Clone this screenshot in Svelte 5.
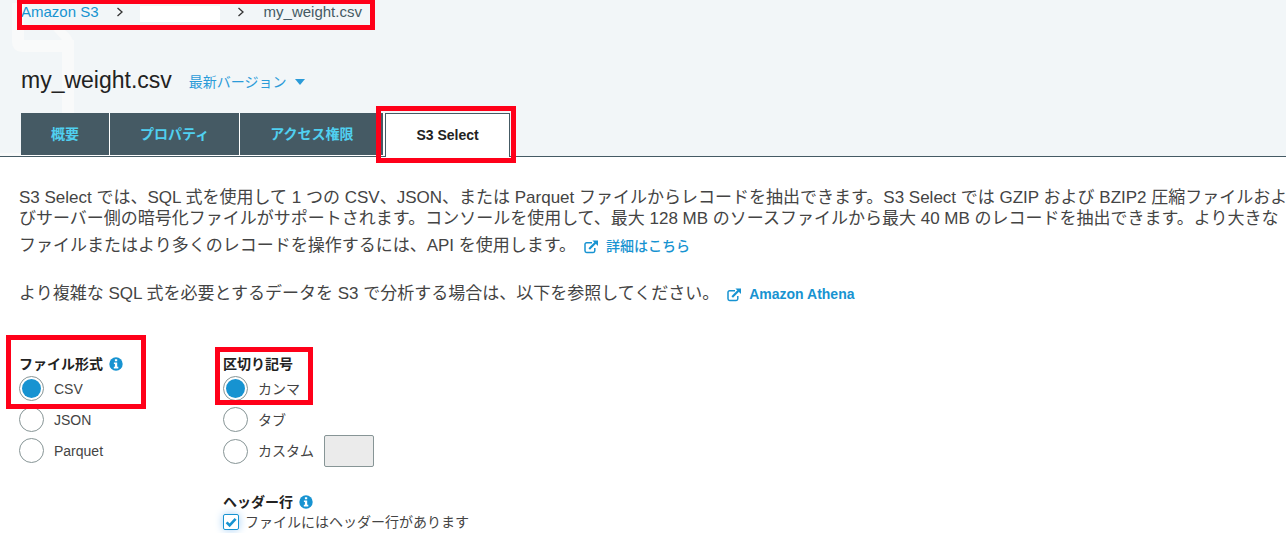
<script>
  const fileName = 'my_weight.csv';
  const tabs = [
    { id: 'overview', label: '概要' },
    { id: 'properties', label: 'プロパティ' },
    { id: 'permissions', label: 'アクセス権限' },
    { id: 'select', label: 'S3 Select' }
  ];
  const formats = ['CSV', 'JSON', 'Parquet'];

  let activeTab = $state('select');
  let format = $state('CSV');
  let delimiter = $state('comma');
  let customDelimiter = $state('');
  let hasHeader = $state(true);
</script>

{#snippet external()}
  <svg class="external" viewBox="0 0 14 14" aria-hidden="true">
    <path d="M8 2.7H2.6A1.6 1.6 0 0 0 1 4.3v6.5a1.6 1.6 0 0 0 1.6 1.6h6.6a1.6 1.6 0 0 0 1.6-1.6V8" fill="none" stroke="currentColor" stroke-width="1.5" />
    <path d="M5.2 9 11.4 2.8" stroke="currentColor" stroke-width="2.2" />
    <path d="M8.4.4H14V6z" fill="currentColor" />
  </svg>
{/snippet}

{#snippet info()}
  <svg class="info" viewBox="0 0 14 14" aria-hidden="true">
    <circle cx="7" cy="7" r="6.7" fill="#1793d1" />
    <path d="M5.9 2.2h2.3v2H5.9zM4.9 5.4h3.3v4.4h1.1v1.6H4.8V9.8h1.1V7h-1z" fill="#fff" />
  </svg>
{/snippet}

<header>
  <svg class="watermark" viewBox="0 0 80 156" aria-hidden="true">
    <path d="M0 153h21v3H0zM48 24q26 4 26 24L62 40z" fill="#f9fafa" />
    <path d="M18 3v39q0 4 4 4h46v110" fill="none" stroke="#f9fafa" stroke-width="12" />
  </svg>

  <nav class="crumbs" aria-label="breadcrumb">
    <a href="#s3">Amazon S3</a>
    <svg class="chevron" viewBox="0 0 8 10" aria-hidden="true"><path d="M1.5 1 6 5 1.5 9" /></svg>
    <span class="bucket"></span>
    <svg class="chevron" viewBox="0 0 8 10" aria-hidden="true"><path d="M1.5 1 6 5 1.5 9" /></svg>
    <span class="current">{fileName}</span>
    <span class="mark mark-crumbs"></span>
  </nav>

  <div class="title">
    <h1>{fileName}</h1>
    <button class="version" type="button">最新バージョン<span class="caret"></span></button>
  </div>

  <div class="tabs" role="tablist">
    {#each tabs as tab (tab.id)}
      <button
        type="button"
        role="tab"
        aria-selected={activeTab === tab.id}
        class:active={activeTab === tab.id}
        onclick={() => (activeTab = tab.id)}
      >{tab.label}{#if tab.id === 'select'}<span class="mark mark-tab"></span>{/if}</button>
    {/each}
  </div>
</header>

<main>
  <p>
    S3 Select では、SQL 式を使用して 1 つの CSV、JSON、または Parquet ファイルからレコードを抽出できます。S3 Select では GZIP および BZIP2 圧縮ファイルおよびサーバー側の暗号化ファイルがサポートされます。コンソールを使用して、最大 128 MB のソースファイルから最大 40 MB のレコードを抽出できます。より大きなファイルまたはより多くのレコードを操作するには、API を使用します。<a class="more light" href="#details">{@render external()}詳細はこちら</a>
  </p>
  <p>
    より複雑な SQL 式を必要とするデータを S3 で分析する場合は、以下を参照してください。<a class="more" href="#athena">{@render external()}Amazon Athena</a>
  </p>

  <form>
    <div class="group">
      <fieldset>
        <legend>ファイル形式 {@render info()}</legend>
        {#each formats as name (name)}
          <label class="choice"><input type="radio" name="format" value={name} bind:group={format} />{name}</label>
        {/each}
      </fieldset>
      <span class="mark mark-format"></span>
    </div>

    <div class="group">
      <fieldset>
        <legend>区切り記号</legend>
        <label class="choice"><input type="radio" name="delimiter" value="comma" bind:group={delimiter} />カンマ</label>
        <label class="choice"><input type="radio" name="delimiter" value="tab" bind:group={delimiter} />タブ</label>
        <div class="custom">
          <label class="choice"><input type="radio" name="delimiter" value="custom" bind:group={delimiter} />カスタム</label>
          <input class="text" type="text" aria-label="カスタム" bind:value={customDelimiter} disabled={delimiter !== 'custom'} />
        </div>
      </fieldset>

      <fieldset class="header-row">
        <legend>ヘッダー行 {@render info()}</legend>
        <label class="check">
          <span class="box">
            <input type="checkbox" bind:checked={hasHeader} />
            {#if hasHeader}
              <svg viewBox="0 0 12 12" aria-hidden="true"><path d="M1.6 6.4 4.6 9.3 10.6 2.8" /></svg>
            {/if}
          </span>
          ファイルにはヘッダー行があります
        </label>
      </fieldset>
      <span class="mark mark-delimiter"></span>
    </div>
  </form>
</main>

<style>
  :global(body) {
    background: #fff;
    color: #444;
    font: 14px/20px 'Liberation Sans', 'Noto Sans CJK JP', sans-serif;
  }

  a {
    color: #1793d1;
    text-decoration: none;
  }

  button {
    border: 0;
    background: none;
    font: inherit;
    cursor: pointer;
  }

  header {
    position: relative;
    padding: 0 21px;
    background: #f2f6f8;
    border-bottom: 1px solid #455a64;
  }

  .watermark {
    position: absolute;
    left: 0;
    top: 0;
    width: 80px;
    height: 156px;
  }

  .crumbs {
    position: relative;
    display: flex;
    align-items: center;
    height: 24px;
    color: #455a64;
    font-size: 15px;
  }

  .chevron {
    width: 8px;
    height: 10px;
    margin: 0 16px 0 17px;
    fill: none;
    stroke: #333;
    stroke-width: 1.3;
  }

  .bucket {
    width: 80px;
    height: 16px;
    margin-top: 4px;
    background: #fff;
  }

  .current {
    padding-left: 3px;
  }

  .title {
    position: relative;
    display: flex;
    align-items: center;
    gap: 17px;
    height: 32px;
    margin: 40px 0 17px;
  }

  h1 {
    margin: 0;
    color: #222;
    font-size: 23px;
    font-weight: 400;
    line-height: 32px;
  }

  .version {
    display: flex;
    align-items: center;
    gap: 8px;
    padding: 4px 0 0;
    color: #2b9bd8;
  }

  .caret {
    border: 5px solid transparent;
    border-top: 6px solid #2b9bd8;
    border-bottom: 0;
  }

  .tabs {
    position: relative;
    display: flex;
    gap: 1px;
    margin-bottom: -1px;
  }

  .tabs::before {
    content: '';
    position: absolute;
    inset: 0 auto 1px 0;
    width: 364px;
    background: #fff;
  }

  .tabs button {
    position: relative;
    height: 42px;
    padding: 0 30px;
    background: #455a64;
    color: #50d0f0;
    font-weight: 700;
  }

  .tabs .active {
    height: 44px;
    margin-left: 1px;
    padding-bottom: 2px;
    border: 1px solid #455a64;
    border-bottom: 0;
    background: #fff;
    color: #222;
  }

  main {
    padding: 30px 0 0 19px;
    overflow: clip;
  }

  p {
    margin: 0 -4px 13px 0;
    color: #444;
    font-size: 17px;
    line-height: 21px;
  }

  .more {
    display: inline-flex;
    align-items: center;
    height: 35px;
    margin-left: 8px;
    font-size: 14px;
    font-weight: 700;
    vertical-align: middle;
  }

  .light {
    font-weight: 500;
  }

  .external {
    width: 14px;
    height: 14px;
    margin-right: 8px;
  }

  form {
    display: flex;
    gap: 100px;
    padding-top: 30px;
  }

  .group {
    position: relative;
    min-width: 100px;
  }

  fieldset {
    min-width: 0;
    margin: 0;
    padding: 0;
    border: 0;
  }

  legend {
    display: flex;
    align-items: center;
    gap: 6px;
    padding: 0;
    color: #222;
    font-weight: 700;
    line-height: 18px;
  }

  .info {
    width: 14px;
    height: 14px;
  }

  .choice {
    display: flex;
    align-items: center;
    gap: 10px;
    height: 31px;
  }

  .choice input {
    display: grid;
    place-items: center;
    appearance: none;
    box-sizing: border-box;
    width: 25px;
    height: 25px;
    margin: 0;
    border: 1px solid #879596;
    border-radius: 50%;
    background: #fff;
  }

  .choice input:checked::before {
    content: '';
    width: 19px;
    height: 19px;
    border-radius: 50%;
    background: #1793d1;
  }

  .custom {
    display: flex;
    align-items: center;
    gap: 10px;
  }

  .text {
    box-sizing: border-box;
    width: 50px;
    height: 32px;
    padding: 0 6px;
    border: 1px solid #879596;
    border-radius: 2px;
    background: #fff;
    font: inherit;
  }

  .text:disabled {
    background: #ebebeb;
  }

  .header-row {
    margin-top: 26px;
  }

  .check {
    display: flex;
    align-items: center;
    gap: 6px;
    height: 22px;
  }

  .box {
    display: grid;
    width: 16px;
    height: 16px;
  }

  .box > * {
    grid-area: 1 / 1;
  }

  .box input {
    appearance: none;
    box-sizing: border-box;
    width: 16px;
    height: 16px;
    margin: 0;
    border: 1px solid #1793d1;
    border-radius: 2px;
    background: #fff;
    box-shadow: 0 0 8px #a5d0f5;
  }

  .box svg {
    width: 12px;
    height: 12px;
    place-self: center;
    fill: none;
    stroke: #1793d1;
    stroke-width: 2.6;
    pointer-events: none;
  }

  /* Highlight frames laid over the parts a reader should notice */
  .mark {
    position: absolute;
    z-index: 1;
    border: 5px solid #ff0019;
    pointer-events: none;
  }

  .mark-crumbs {
    inset: -1px auto -6px -4px;
    width: 348px;
  }

  .mark-tab {
    inset: -8px -7px -6px -10px;
  }

  .mark-format {
    left: -13px;
    top: -20px;
    width: 130px;
    height: 64px;
  }

  .mark-delimiter {
    left: -8px;
    top: -8px;
    width: 88px;
    height: 48px;
  }
</style>
